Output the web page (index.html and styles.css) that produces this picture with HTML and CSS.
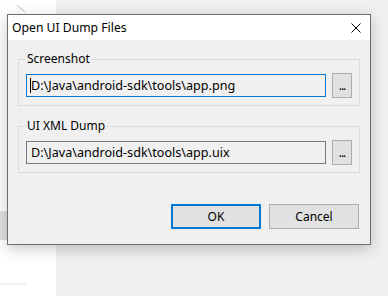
FILE: index.html
```html
<!DOCTYPE html>
<html lang="en">
<head>
  <meta charset="UTF-8" />
  <title>Open UI Dump Files</title>
  <link rel="stylesheet" href="styles.css">
</head>
<body>

  <!-- window behind the dialog -->
  <div class="backdrop">
    <div class="side">
      <span class="side-tick"></span>
      <span class="side-block"></span>
      <span class="side-line"></span>
    </div>
    <div class="rest"></div>
  </div>

  <div class="dialog">
    <div class="titlebar">
      <span class="title">Open UI Dump Files</span>
      <svg class="close" width="10" height="10" viewBox="0 0 10 10">
        <path d="M0.5 0.5 L9.5 9.5 M9.5 0.5 L0.5 9.5" stroke="#000" stroke-width="1" fill="none" />
      </svg>
    </div>

    <div class="body">
      <fieldset class="group">
        <legend>Screenshot</legend>
        <div class="row">
          <div class="field focused"><span class="caret"></span>D:\Java\android-sdk\tools\app.png</div>
          <button class="browse">...</button>
        </div>
      </fieldset>

      <fieldset class="group second">
        <legend>UI XML Dump</legend>
        <div class="row">
          <div class="field">D:\Java\android-sdk\tools\app.uix</div>
          <button class="browse">...</button>
        </div>
      </fieldset>

      <div class="actions">
        <button class="btn default">OK</button>
        <button class="btn">Cancel</button>
      </div>
    </div>
  </div>

</body>
</html>
```

FILE: styles.css
```css
html, body {
  margin: 0;
  padding: 0;
  width: 388px;
  height: 296px;
  overflow: hidden;
}

body {
  font-family: 'Noto Sans', 'Open Sans', sans-serif;
  font-size: 12px;
  color: #000;
  position: relative;
}

.backdrop {
  display: flex;
  height: 100%;
}

.side {
  width: 56px;
  background: #fff;
  position: relative;
}

.rest {
  flex: 1;
  background: #f0f0f0;
}

.side-tick {
  position: absolute;
  left: 16px;
  top: 8px;
  width: 10px;
  height: 1px;
  background: #c8c8c8;
  transform: rotate(40deg);
}

.side-block {
  position: absolute;
  left: 0;
  top: 211px;
  width: 8px;
  height: 29px;
  background: #e0e0e0;
}

.side-line {
  position: absolute;
  left: 0;
  top: 283px;
  width: 26px;
  height: 2px;
  background: #f0f0f0;
}

/* dialog window */
.dialog {
  position: absolute;
  left: 7px;
  top: 14px;
  width: 362px;
  height: 229px;
  border: 1px solid #6e6e6e;
  background: #f0f0f0;
  box-shadow: 0 4px 14px rgba(0, 0, 0, 0.22);
}

.titlebar {
  height: 25px;
  background: #fff;
  display: flex;
  align-items: center;
  justify-content: space-between;
  padding: 0 9px 0 4px;
}

.title {
  font-size: 12.2px;
  line-height: 16px;
}

.close {
  display: block;
}

.body {
  padding: 11px 11px 0 10px;
}

.group {
  margin: 0;
  width: 340px;
  padding: 6px 7px 7px;
  border: 1px solid #dcdcdc;
  box-sizing: border-box;
}

.group legend {
  padding: 0 1px;
  margin-left: 0;
  line-height: 16px;
}

.group.second {
  margin-top: 12px;
}

.row {
  display: flex;
  align-items: center;
  gap: 6px;
  height: 25px;
}

.field {
  width: 300px;
  height: 23px;
  box-sizing: border-box;
  border: 1px solid #7a7a7a;
  background: #f0f0f0;
  padding: 0 4px;
  font-size: 12.6px;
  line-height: 21px;
  white-space: nowrap;
  position: relative;
}

.field.focused {
  border-color: #0078d7;
}

.caret {
  position: absolute;
  left: 3px;
  top: 3px;
  width: 1px;
  height: 15px;
  background: #000;
}

.browse {
  width: 20px;
  height: 25px;
  box-sizing: border-box;
  border: 1px solid #adadad;
  background: #e1e1e1;
  font-family: inherit;
  font-size: 12px;
  padding: 0;
  line-height: 20px;
  letter-spacing: -1px;
}

.actions {
  display: flex;
  justify-content: flex-end;
  gap: 8px;
  margin-top: 31px;
}

.btn {
  width: 90px;
  height: 25px;
  box-sizing: border-box;
  border: 1px solid #adadad;
  background: #e1e1e1;
  font-family: inherit;
  font-size: 12px;
  padding: 0;
  color: #000;
}

.btn.default {
  border: 2px solid #0078d7;
}
```
